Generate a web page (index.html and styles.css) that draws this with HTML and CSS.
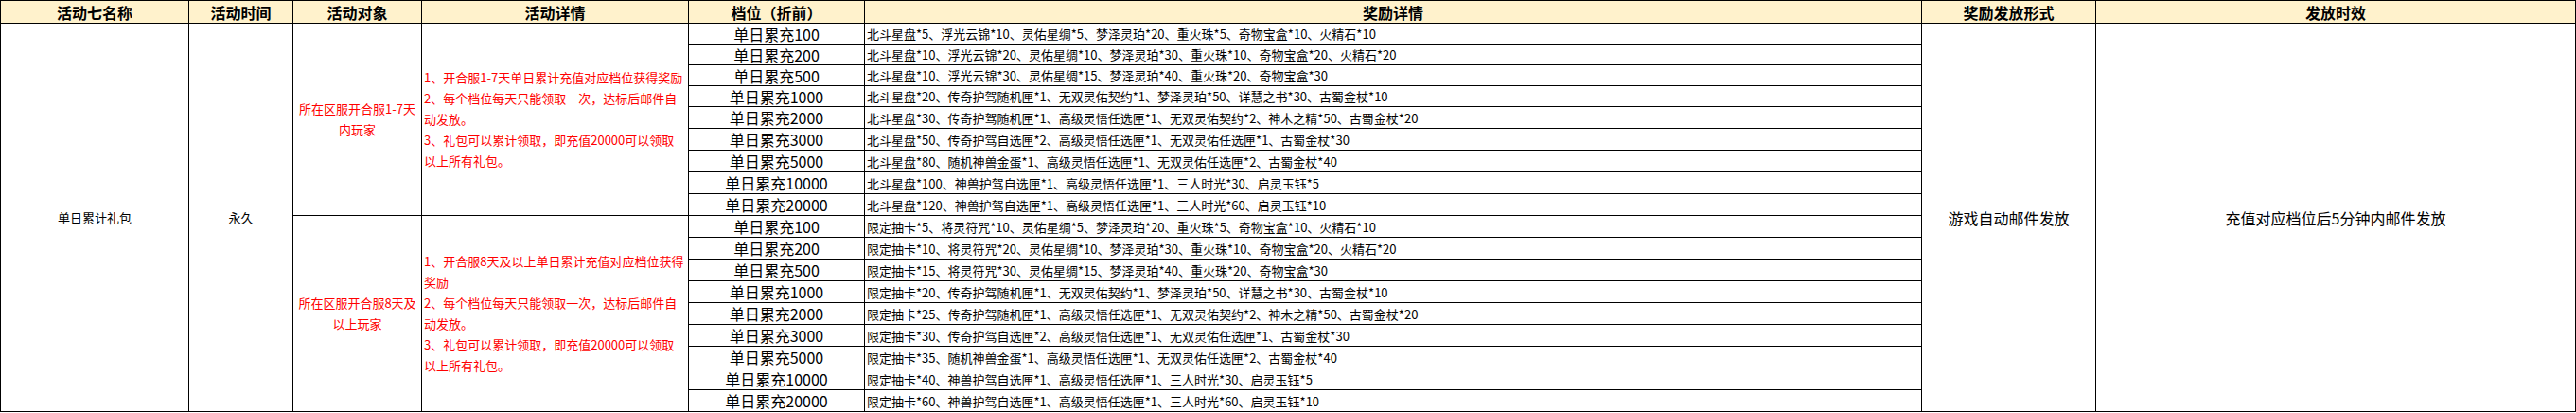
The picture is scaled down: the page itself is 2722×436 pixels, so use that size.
FILE: index.html
```html
<!DOCTYPE html>
<html lang="zh-CN">
<head>
<meta charset="utf-8">
<title>单日累计礼包</title>
<link rel="stylesheet" href="styles.css">
</head>
<body>
<div class="sheet">
  <div class="cell head">活动七名称</div>
  <div class="cell head">活动时间</div>
  <div class="cell head">活动对象</div>
  <div class="cell head">活动详情</div>
  <div class="cell head">档位（折前）</div>
  <div class="cell head">奖励详情</div>
  <div class="cell head">奖励发放形式</div>
  <div class="cell head">发放时效</div>

  <div class="cell span-all small">单日累计礼包</div>
  <div class="cell span-all small">永久</div>
  <div class="cell span-group small red centered-text">所在区服开合服1-7天<br>内玩家</div>
  <div class="cell span-group small red left"><p class="rules">1、开合服1-7天单日累计充值对应档位获得奖励<br>2、每个档位每天只能领取一次，达标后邮件自<br>动发放。<br>3、礼包可以累计领取，即充值20000可以领取<br>以上所有礼包。</p></div>
  <div class="cell tier">单日累充100</div>
  <div class="cell reward">北斗星盘*5、浮光云锦*10、灵佑星绸*5、梦泽灵珀*20、重火珠*5、奇物宝盒*10、火精石*10</div>
  <div class="cell span-all big">游戏自动邮件发放</div>
  <div class="cell span-all big">充值对应档位后5分钟内邮件发放</div>

  <div class="cell tier">单日累充200</div>
  <div class="cell reward">北斗星盘*10、浮光云锦*20、灵佑星绸*10、梦泽灵珀*30、重火珠*10、奇物宝盒*20、火精石*20</div>
  <div class="cell tier">单日累充500</div>
  <div class="cell reward">北斗星盘*10、浮光云锦*30、灵佑星绸*15、梦泽灵珀*40、重火珠*20、奇物宝盒*30</div>
  <div class="cell tier">单日累充1000</div>
  <div class="cell reward">北斗星盘*20、传奇护驾随机匣*1、无双灵佑契约*1、梦泽灵珀*50、详慧之书*30、古蜀金杖*10</div>
  <div class="cell tier">单日累充2000</div>
  <div class="cell reward">北斗星盘*30、传奇护驾随机匣*1、高级灵悟任选匣*1、无双灵佑契约*2、神木之精*50、古蜀金杖*20</div>
  <div class="cell tier">单日累充3000</div>
  <div class="cell reward">北斗星盘*50、传奇护驾自选匣*2、高级灵悟任选匣*1、无双灵佑任选匣*1、古蜀金杖*30</div>
  <div class="cell tier">单日累充5000</div>
  <div class="cell reward">北斗星盘*80、随机神兽金蛋*1、高级灵悟任选匣*1、无双灵佑任选匣*2、古蜀金杖*40</div>
  <div class="cell tier">单日累充10000</div>
  <div class="cell reward">北斗星盘*100、神兽护驾自选匣*1、高级灵悟任选匣*1、三人时光*30、启灵玉钰*5</div>
  <div class="cell tier">单日累充20000</div>
  <div class="cell reward">北斗星盘*120、神兽护驾自选匣*1、高级灵悟任选匣*1、三人时光*60、启灵玉钰*10</div>

  <div class="cell span-group small red centered-text">所在区服开合服8天及<br>以上玩家</div>
  <div class="cell span-group small red left"><p class="rules">1、开合服8天及以上单日累计充值对应档位获得<br>奖励<br>2、每个档位每天只能领取一次，达标后邮件自<br>动发放。<br>3、礼包可以累计领取，即充值20000可以领取<br>以上所有礼包。</p></div>
  <div class="cell tier">单日累充100</div>
  <div class="cell reward">限定抽卡*5、将灵符咒*10、灵佑星绸*5、梦泽灵珀*20、重火珠*5、奇物宝盒*10、火精石*10</div>
  <div class="cell tier">单日累充200</div>
  <div class="cell reward">限定抽卡*10、将灵符咒*20、灵佑星绸*10、梦泽灵珀*30、重火珠*10、奇物宝盒*20、火精石*20</div>
  <div class="cell tier">单日累充500</div>
  <div class="cell reward">限定抽卡*15、将灵符咒*30、灵佑星绸*15、梦泽灵珀*40、重火珠*20、奇物宝盒*30</div>
  <div class="cell tier">单日累充1000</div>
  <div class="cell reward">限定抽卡*20、传奇护驾随机匣*1、无双灵佑契约*1、梦泽灵珀*50、详慧之书*30、古蜀金杖*10</div>
  <div class="cell tier">单日累充2000</div>
  <div class="cell reward">限定抽卡*25、传奇护驾随机匣*1、高级灵悟任选匣*1、无双灵佑契约*2、神木之精*50、古蜀金杖*20</div>
  <div class="cell tier">单日累充3000</div>
  <div class="cell reward">限定抽卡*30、传奇护驾自选匣*2、高级灵悟任选匣*1、无双灵佑任选匣*1、古蜀金杖*30</div>
  <div class="cell tier">单日累充5000</div>
  <div class="cell reward">限定抽卡*35、随机神兽金蛋*1、高级灵悟任选匣*1、无双灵佑任选匣*2、古蜀金杖*40</div>
  <div class="cell tier">单日累充10000</div>
  <div class="cell reward">限定抽卡*40、神兽护驾自选匣*1、高级灵悟任选匣*1、三人时光*30、启灵玉钰*5</div>
  <div class="cell tier">单日累充20000</div>
  <div class="cell reward">限定抽卡*60、神兽护驾自选匣*1、高级灵悟任选匣*1、三人时光*60、启灵玉钰*10</div>
</div>
</body>
</html>
```
FILE: styles.css
```css
html, body {
  margin: 0;
  padding: 0;
  background: #ffffff;
}

body {
  font-family: "Noto Sans CJK SC", "Noto Sans", sans-serif;
  color: #000000;
}

.sheet {
  display: grid;
  grid-template-columns: 199px 110px 136px 282px 186px 1117px 184px 507px;
  grid-template-rows: 24px repeat(4, 22px) repeat(14, 23px);
  width: 2722px;
  box-sizing: border-box;
  border-left: 1px solid #000;
  border-top: 1px solid #000;
}

.cell {
  box-sizing: border-box;
  border-right: 1px solid #000;
  border-bottom: 1px solid #000;
  display: flex;
  align-items: center;
  justify-content: center;
  white-space: nowrap;
  overflow: hidden;
  line-height: 1;
}

.head {
  background: #fff2cc;
  font-size: 16px;
  font-weight: 700;
}

.span-all {
  grid-row: span 18;
}

.span-group {
  grid-row: span 9;
}

.small {
  font-size: 13px;
}

.big {
  font-size: 16px;
}

.red {
  color: #ff0000;
}

.centered-text {
  text-align: center;
  line-height: 22px;
}

.left {
  justify-content: flex-start;
  padding-left: 2px;
}

.rules {
  margin: 0;
  line-height: 22px;
  text-align: left;
}

.tier {
  font-size: 16px;
}

.reward {
  font-size: 13px;
  justify-content: flex-start;
  padding-left: 2px;
}
```
